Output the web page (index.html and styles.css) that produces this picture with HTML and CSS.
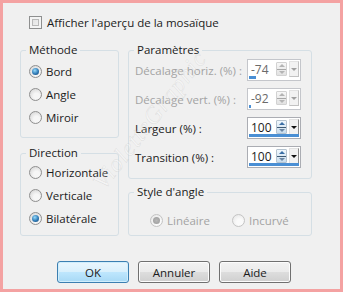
FILE: index.html
```html
<!DOCTYPE html>
<html lang="fr">
<head>
    <meta charset="UTF-8">
    <meta name="viewport" content="width=device-width, initial-scale=1.0">
    <title>Mosaïque</title>

    <link rel="stylesheet" href="styles.css">
</head>
<body>
    <div class="dialog">
        <div class="check-row">
            <span class="checkbox"></span>
            <span>Afficher l'aperçu de la mosaïque</span>
        </div>

        <div class="columns">
            <div class="col col-left">
                <fieldset class="group group-method">
                    <legend>Méthode</legend>
                    <div class="group-body">
                        <div class="radio-row"><span class="radio checked"></span>Bord</div>
                        <div class="radio-row"><span class="radio"></span>Angle</div>
                        <div class="radio-row"><span class="radio"></span>Miroir</div>
                    </div>
                </fieldset>

                <fieldset class="group group-direction">
                    <legend>Direction</legend>
                    <div class="group-body">
                        <div class="radio-row"><span class="radio"></span>Horizontale</div>
                        <div class="radio-row"><span class="radio"></span>Verticale</div>
                        <div class="radio-row"><span class="radio checked"></span>Bilatérale</div>
                    </div>
                </fieldset>
            </div>

            <div class="col col-right">
                <fieldset class="group group-params">
                    <legend>Paramètres</legend>
                    <div class="group-body">
                        <div class="param-row disabled">
                            <span class="param-label">Décalage horiz. (%) :</span>
                            <div class="spin">
                                <span class="spin-value">-74</span>
                                <span class="spin-arrows"><i class="up"></i><i class="down"></i></span>
                                <span class="spin-drop"><i></i></span>
                                <span class="spin-bar" style="width: 7px"></span>
                            </div>
                        </div>

                        <div class="param-row disabled">
                            <span class="param-label">Décalage vert. (%) :</span>
                            <div class="spin">
                                <span class="spin-value">-92</span>
                                <span class="spin-arrows"><i class="up"></i><i class="down"></i></span>
                                <span class="spin-drop"><i></i></span>
                                <span class="spin-bar" style="width: 2px"></span>
                            </div>
                        </div>

                        <div class="param-row">
                            <span class="param-label">Largeur (%) :</span>
                            <div class="spin">
                                <span class="spin-value">100</span>
                                <span class="spin-arrows"><i class="up"></i><i class="down"></i></span>
                                <span class="spin-drop"><i></i></span>
                                <span class="spin-bar" style="width: 50px"></span>
                            </div>
                        </div>

                        <div class="param-row">
                            <span class="param-label">Transition (%) :</span>
                            <div class="spin">
                                <span class="spin-value">100</span>
                                <span class="spin-arrows"><i class="up"></i><i class="down"></i></span>
                                <span class="spin-drop"><i></i></span>
                                <span class="spin-bar" style="width: 50px"></span>
                            </div>
                        </div>
                    </div>
                </fieldset>

                <fieldset class="group group-style">
                    <legend>Style d'angle</legend>
                    <div class="group-body style-row disabled">
                        <div class="radio-row style-item"><span class="radio checked"></span>Linéaire</div>
                        <div class="radio-row"><span class="radio"></span>Incurvé</div>
                    </div>
                </fieldset>
            </div>
        </div>

        <div class="buttons">
            <button class="btn btn-default" type="button">OK</button>
            <button class="btn" type="button">Annuler</button>
            <button class="btn" type="button">Aide</button>
        </div>

        <div class="watermark">VioletteGraphic</div>
    </div>
</body>
</html>
```

FILE: styles.css
```css
*{
    box-sizing: border-box;
}

body{
    margin: 0;
    font-family: "Segoe UI", "Open Sans", sans-serif;
    font-size: 11.5px;
    color: #1b1b1b;
}

.dialog{
    position: relative;
    width: 343px;
    height: 292px;
    border: 3px solid #f4a2a2;
    background-color: #f0f0f0;
    padding: 13px 0 0 17px;
    overflow: hidden;
}

/* checkbox row */
.check-row{
    display: flex;
    align-items: center;
    height: 13px;
    padding-left: 9px;
    gap: 5px;
}

.checkbox{
    width: 13px;
    height: 13px;
    border: 1px solid #8e8f8f;
    background: linear-gradient(135deg, #dcdcdc, #f7f7f7);
    box-shadow: inset 0 0 0 2px #f4f4f4, inset 0 0 0 3px #b9b9b9;
}

/* columns */
.columns{
    display: grid;
    grid-template-columns: 99px 184px;
    column-gap: 9px;
    margin-top: 13px;
}

.col{
    display: flex;
    flex-direction: column;
}

.col-left{
    gap: 7px;
}

.col-right{
    gap: 5px;
}

.group{
    margin: 0;
    padding: 0;
    min-width: 0;
    border: 1px solid #d5dfe5;
    border-radius: 3px;
}

.group legend{
    margin-left: 5px;
    padding: 0 3px;
    line-height: 16px;
}

.group-method{
    height: 96px;
}

.group-method .group-body{
    padding: 2px 0 0 8px;
}

.group-direction{
    height: 91px;
}

.group-direction .group-body{
    padding-left: 8px;
}

.radio-row{
    display: flex;
    align-items: center;
    gap: 4px;
    height: 23px;
}

.radio{
    position: relative;
    width: 13px;
    height: 13px;
    border-radius: 50%;
    border: 1px solid #8f8f8f;
    background: radial-gradient(circle at 60% 65%, #f6f6f6 30%, #d4d4d4 90%);
}

.radio.checked::after{
    content: "";
    position: absolute;
    left: 2px;
    top: 2px;
    width: 7px;
    height: 7px;
    border-radius: 50%;
    background: radial-gradient(circle at 40% 35%, #97dbfb, #2f7ab6 55%, #17426b);
}

/* parameters */
.group-params{
    height: 137px;
}

.group-params .group-body{
    padding: 1px 10px 0 6px;
}

.param-row{
    display: flex;
    align-items: center;
    justify-content: space-between;
    height: 22px;
    margin-bottom: 7px;
}

.disabled{
    color: #a3a3a3;
}

.spin{
    position: relative;
    display: flex;
    align-items: center;
    width: 54px;
    height: 22px;
    border: 1px solid #abadb3;
    background-color: #fff;
    padding: 0 1px 2px 3px;
    color: #1b1b1b;
    font-size: 12px;
}

.disabled .spin{
    border-color: #c4c6cb;
    color: #6a6a6a;
}

.spin-value{
    flex: 1;
}

.spin-arrows{
    display: flex;
    flex-direction: column;
    width: 11px;
    height: 14px;
    margin-right: 2px;
    border: 1px solid #b5c3cf;
    border-radius: 1px;
    background: linear-gradient(#f0f7fc, #c8dced);
}

.spin-arrows i{
    flex: 1;
    display: flex;
    align-items: center;
    justify-content: center;
}

.spin-arrows i.up{
    border-bottom: 1px solid #3f5a74;
}

.spin-arrows i.up::after,
.spin-arrows i.down::after{
    content: "";
    border-left: 3px solid transparent;
    border-right: 3px solid transparent;
}

.spin-arrows i.up::after{
    border-bottom: 3px solid #3a6ea5;
}

.spin-arrows i.down::after{
    border-top: 3px solid #6b86a3;
}

.disabled .spin-arrows{
    border-color: #d2d2d2;
    background: linear-gradient(#f7f7f7, #e2e2e2);
}

.disabled .spin-arrows i.up{
    border-bottom-color: #a8a8a8;
}

.disabled .spin-arrows i.up::after{
    border-bottom-color: #b4b4b4;
}

.disabled .spin-arrows i.down::after{
    border-top-color: #b4b4b4;
}

.spin-drop{
    display: flex;
    align-items: center;
    justify-content: center;
    width: 10px;
    height: 16px;
    border-right: 1px solid #8a8a8a;
    border-bottom: 1px solid #8a8a8a;
    border-left: 1px solid #e2e2e2;
    border-top: 1px solid #e2e2e2;
    background-color: #f2f2f2;
}

.spin-drop i{
    border-left: 3px solid transparent;
    border-right: 3px solid transparent;
    border-top: 3px solid #111;
}

.disabled .spin-drop{
    border-right-color: #c2c2c2;
    border-bottom-color: #c2c2c2;
}

.disabled .spin-drop i{
    border-top-color: #a0a0a0;
}

.spin-bar{
    position: absolute;
    left: 1px;
    bottom: 1px;
    height: 3px;
    background-color: #4a8fd4;
}

/* corner style */
.group-style{
    height: 52px;
}

.style-row{
    display: flex;
    align-items: center;
    padding: 9px 0 0 21px;
}

.style-item{
    width: 82px;
}

.style-row .radio{
    border-color: #c4c4c4;
    background: radial-gradient(circle at 60% 65%, #fafafa 30%, #e6e6e6 90%);
}

.style-row .radio.checked::after{
    background: radial-gradient(circle, #b8b8b8, #9a9a9a);
}

/* buttons */
.buttons{
    display: flex;
    gap: 9px;
    margin-top: 25px;
    padding-left: 37px;
}

.btn{
    width: 72px;
    height: 22px;
    padding: 0;
    font-family: inherit;
    font-size: 11.5px;
    color: #1b1b1b;
    border: 1px solid #707070;
    border-radius: 3px;
    background: linear-gradient(#f2f2f2 0%, #ebebeb 48%, #dddddd 52%, #cfcfcf 100%);
    box-shadow: inset 0 0 0 1px #fcfcfc;
}

.btn-default{
    border-color: #3c7fb1;
    background: linear-gradient(#eaf6fd 0%, #d9f0fc 48%, #bee6fd 52%, #a7d9f5 100%);
    box-shadow: inset 0 0 0 1px #d0eefc;
}

/* watermark over the content */
.watermark{
    position: absolute;
    left: 147px;
    top: 117px;
    transform: translate(-50%, -50%) rotate(-52deg);
    font-family: "Liberation Serif", serif;
    font-style: italic;
    font-size: 24px;
    letter-spacing: 1px;
    white-space: nowrap;
    color: rgba(255, 255, 255, 0.3);
    -webkit-text-stroke: 0.5px rgba(150, 150, 150, 0.22);
    pointer-events: none;
}
```
